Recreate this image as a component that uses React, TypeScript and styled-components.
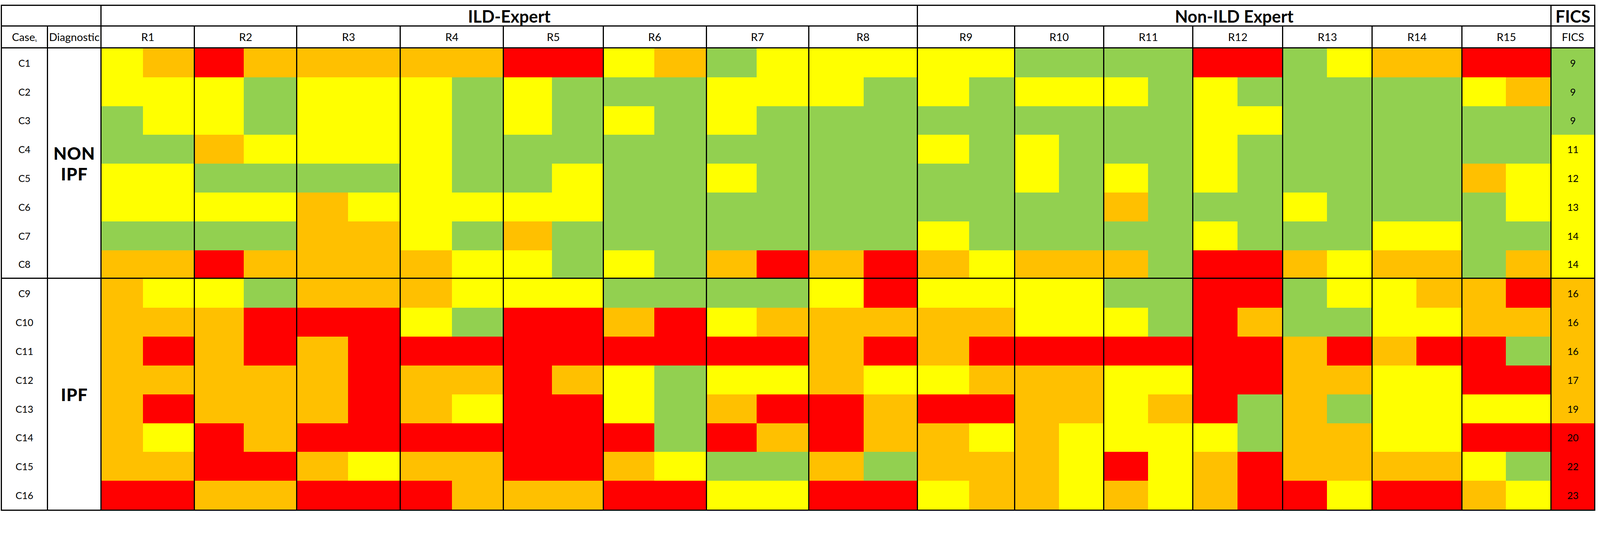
import React from 'react';
import styled, { createGlobalStyle } from 'styled-components';

type Tone = 'Y' | 'O' | 'R' | 'G';

const TONES: Record<Tone, string> = {
  Y: '#ffff00',
  O: '#ffc000',
  R: '#ff0000',
  G: '#92d050',
};

// sizes are taken from a 4267px wide sheet and kept in proportion to the window
const u = (n: number) => `${((n * 100) / 4267).toFixed(4)}vw`;

// widths of each half-column, reviewer by reviewer
const REVIEWER_COLS: [number, number][] = [
  [113, 136], [133, 140], [138, 138], [139, 136], [131, 135], [138, 137], [136, 137], [148, 142],
  [140, 119], [120, 118], [120, 118], [120, 119], [120, 119], [119, 120], [119, 119],
];

const TRACKS = [120, 143, ...REVIEWER_COLS.flat(), 117].map(u).join(' ');

// two letters per reviewer, R1..R15
const CASES: { id: string; scores: string[]; fics: number; tone: Tone }[] = [
  { id: 'C1', scores: ['YO', 'RO', 'OO', 'OO', 'RR', 'YO', 'GY', 'YY', 'YY', 'GG', 'GG', 'RR', 'GY', 'OO', 'RR'], fics: 9, tone: 'G' },
  { id: 'C2', scores: ['YY', 'YG', 'YY', 'YG', 'YG', 'GG', 'YY', 'YG', 'YG', 'YY', 'YG', 'YG', 'GG', 'GG', 'YO'], fics: 9, tone: 'G' },
  { id: 'C3', scores: ['GY', 'YG', 'YY', 'YG', 'YG', 'YG', 'YG', 'GG', 'GG', 'GG', 'GG', 'YY', 'GG', 'GG', 'GG'], fics: 9, tone: 'G' },
  { id: 'C4', scores: ['GG', 'OY', 'YY', 'YG', 'GG', 'GG', 'GG', 'GG', 'YG', 'YG', 'GG', 'YG', 'GG', 'GG', 'GG'], fics: 11, tone: 'Y' },
  { id: 'C5', scores: ['YY', 'GG', 'GG', 'YG', 'GY', 'GG', 'YG', 'GG', 'GG', 'YG', 'YG', 'YG', 'GG', 'GG', 'OY'], fics: 12, tone: 'Y' },
  { id: 'C6', scores: ['YY', 'YY', 'OY', 'YY', 'YY', 'GG', 'GG', 'GG', 'GG', 'GG', 'OG', 'GG', 'YG', 'GG', 'GY'], fics: 13, tone: 'Y' },
  { id: 'C7', scores: ['GG', 'GG', 'OO', 'YG', 'OG', 'GG', 'GG', 'GG', 'YG', 'GG', 'GG', 'YG', 'GG', 'YY', 'GG'], fics: 14, tone: 'Y' },
  { id: 'C8', scores: ['OO', 'RO', 'OO', 'OY', 'YG', 'YG', 'OR', 'OR', 'OY', 'OO', 'OG', 'RR', 'OY', 'OO', 'GO'], fics: 14, tone: 'Y' },
  { id: 'C9', scores: ['OY', 'YG', 'OO', 'OY', 'YY', 'GG', 'GG', 'YR', 'YY', 'YY', 'GG', 'RR', 'GY', 'YO', 'OR'], fics: 16, tone: 'O' },
  { id: 'C10', scores: ['OO', 'OR', 'RR', 'YG', 'RR', 'OR', 'YO', 'OO', 'OO', 'YY', 'YG', 'RO', 'GG', 'YY', 'OO'], fics: 16, tone: 'O' },
  { id: 'C11', scores: ['OR', 'OR', 'OR', 'RR', 'RR', 'RR', 'RR', 'OR', 'OR', 'RR', 'RR', 'RR', 'OR', 'OR', 'RG'], fics: 16, tone: 'O' },
  { id: 'C12', scores: ['OO', 'OO', 'OR', 'OO', 'RO', 'YG', 'YY', 'OY', 'YO', 'OO', 'YY', 'RR', 'OO', 'YY', 'RR'], fics: 17, tone: 'O' },
  { id: 'C13', scores: ['OR', 'OO', 'OR', 'OY', 'RR', 'YG', 'OR', 'RO', 'RR', 'OO', 'YO', 'RG', 'OG', 'YY', 'YY'], fics: 19, tone: 'O' },
  { id: 'C14', scores: ['OY', 'RO', 'RR', 'RR', 'RR', 'RG', 'RO', 'RO', 'OY', 'OY', 'YY', 'YG', 'OO', 'YY', 'RR'], fics: 20, tone: 'R' },
  { id: 'C15', scores: ['OO', 'RR', 'OY', 'OO', 'RR', 'OY', 'GG', 'OG', 'OO', 'OY', 'RY', 'OR', 'OO', 'OO', 'YG'], fics: 22, tone: 'R' },
  { id: 'C16', scores: ['RR', 'OO', 'RR', 'RO', 'OO', 'RR', 'YY', 'RR', 'YO', 'OY', 'OY', 'OR', 'RY', 'RR', 'OY'], fics: 23, tone: 'R' },
];

const LINE = `${u(4)} solid #000`;

const GlobalStyle = createGlobalStyle`
  html, body {
    margin: 0;
    padding: 0;
    background: #ffffff;
    overflow: hidden;
  }
  body {
    font-family: Lato, 'Open Sans', 'Liberation Sans', sans-serif;
    color: #000000;
  }
  *, *::before, *::after {
    box-sizing: border-box;
  }
`;

const Page = styled.div`
  padding: ${u(13)} 0 0 ${u(2)};
`;

const Sheet = styled.div`
  display: inline-grid;
  grid-template-columns: ${TRACKS};
  grid-template-rows: ${u(55)} ${u(58)} repeat(16, ${u(76.9)});
  border: ${LINE};
  box-sizing: content-box;
  background: #fff;
`;

const Cell = styled.div<{ $left?: boolean; $bottom?: boolean }>`
  display: flex;
  align-items: center;
  justify-content: center;
  text-align: center;
  ${p => p.$left && `border-left: ${LINE};`}
  ${p => p.$bottom && `border-bottom: ${LINE};`}
`;

const GroupHead = styled(Cell)<{ $span: number }>`
  grid-column: span ${p => p.$span};
  border-bottom: ${LINE};
  font-size: ${u(45)};
  font-weight: 700;
  line-height: 1;
  padding-top: ${u(2)};
`;

const ColHead = styled(Cell)<{ $span?: number }>`
  grid-column: span ${p => p.$span ?? 1};
  border-bottom: ${LINE};
  font-size: ${u(29)};
  line-height: 1;
  white-space: nowrap;

  sub {
    font-size: ${u(12)};
    line-height: 0;
    vertical-align: ${u(-2)};
  }
`;

const CaseLabel = styled(Cell)`
  font-size: ${u(26)};
`;

const Diagnosis = styled(Cell)`
  grid-row: span 8;
  border-left: ${LINE};
  font-size: ${u(46)};
  font-weight: 900;
  line-height: 1.2;
  letter-spacing: ${u(1)};
`;

const Score = styled(Cell)<{ $tone: Tone }>`
  background: ${p => TONES[p.$tone]};
`;

const Fics = styled(Cell)<{ $tone: Tone }>`
  border-left: ${LINE};
  background: ${p => TONES[p.$tone]};
  font-size: ${u(26)};
  font-weight: 400;
`;

export default function App() {
  return (
    <Page>
      <GlobalStyle />
      <Sheet>
        <GroupHead $span={2} />
        <GroupHead $span={16} $left>
          ILD-Expert
        </GroupHead>
        <GroupHead $span={14} $left>
          Non-ILD Expert
        </GroupHead>
        <GroupHead $span={1} $left>
          FICS
        </GroupHead>

        <ColHead>
          <span>
            Case<sub>s</sub>
          </span>
        </ColHead>
        <ColHead $left>Diagnostic</ColHead>
        {REVIEWER_COLS.map((_, i) => (
          <ColHead key={i} $span={2} $left>
            R{i + 1}
          </ColHead>
        ))}
        <ColHead $left>FICS</ColHead>

        {CASES.map((c, r) => {
          const groupEnd = r === 7;
          return (
            <React.Fragment key={c.id}>
              <CaseLabel $bottom={groupEnd}>{c.id}</CaseLabel>
              {r === 0 && (
                <Diagnosis $bottom>
                  NON
                  <br />
                  IPF
                </Diagnosis>
              )}
              {r === 8 && <Diagnosis>IPF</Diagnosis>}
              {c.scores.map((pair, i) => (
                <React.Fragment key={i}>
                  <Score $tone={pair[0] as Tone} $left $bottom={groupEnd} />
                  <Score $tone={pair[1] as Tone} $bottom={groupEnd} />
                </React.Fragment>
              ))}
              <Fics $tone={c.tone} $bottom={groupEnd}>
                {c.fics}
              </Fics>
            </React.Fragment>
          );
        })}
      </Sheet>
    </Page>
  );
}
